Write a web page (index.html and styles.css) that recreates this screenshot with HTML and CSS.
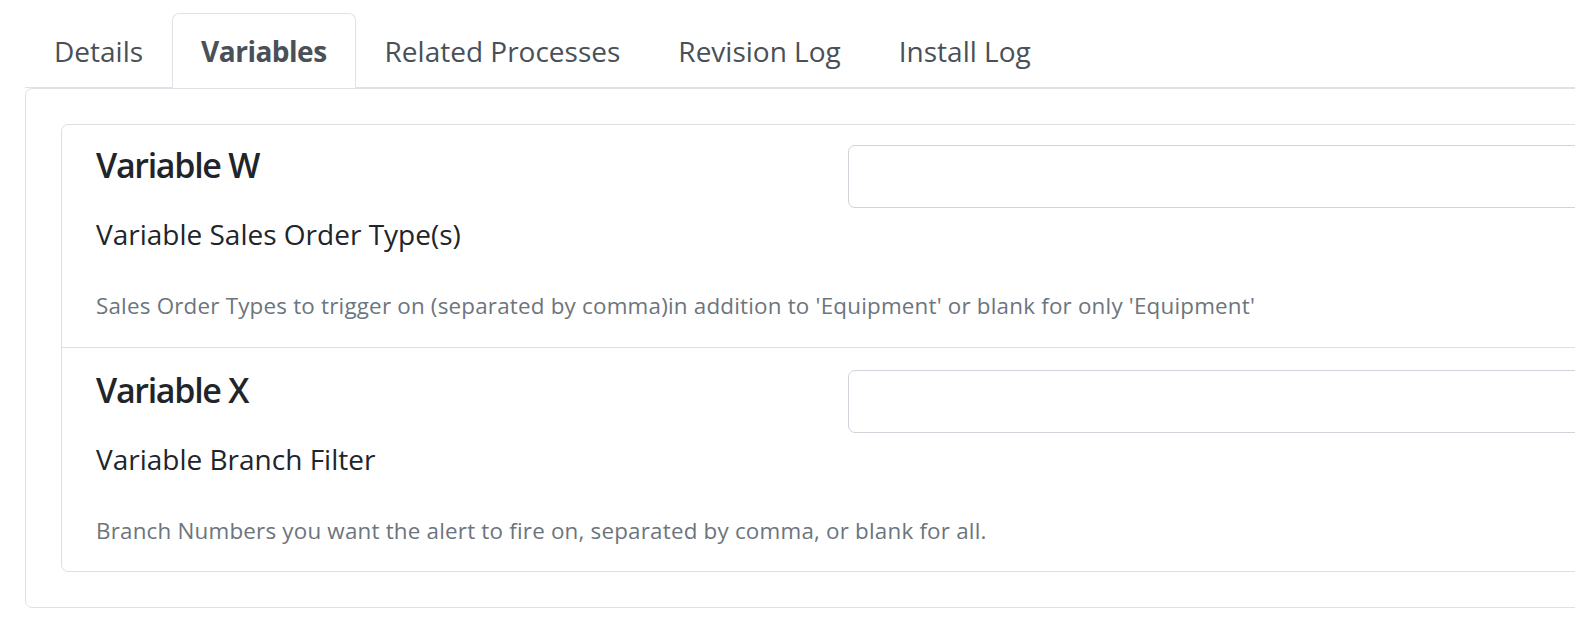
FILE: index.html
```html
<!DOCTYPE html>
<html lang="en">
<head>
    <meta charset="UTF-8">
    <meta name="viewport" content="width=device-width, initial-scale=1.0">
    <title>Process Variables</title>
    <link rel="stylesheet" href="styles.css">
</head>
<body>

    <div class="page">
        <ul class="nav-tabs">
            <li><a class="tab" href="#">Details</a></li>
            <li><a class="tab active" href="#">Variables</a></li>
            <li><a class="tab" href="#">Related Processes</a></li>
            <li><a class="tab" href="#">Revision Log</a></li>
            <li><a class="tab" href="#">Install Log</a></li>
        </ul>

        <div class="tab-pane">
            <div class="var-list">
                <div class="var-item">
                    <div class="var-row">
                        <div class="var-text">
                            <h5 class="var-name">Variable W</h5>
                            <label class="var-label" for="varW">Variable Sales Order Type(s)</label>
                        </div>
                        <div class="var-field">
                            <input type="text" id="varW" class="form-control">
                        </div>
                    </div>
                    <small class="var-help">Sales Order Types to trigger on (separated by comma)in addition to 'Equipment' or blank for only 'Equipment'</small>
                </div>
                <div class="var-item">
                    <div class="var-row">
                        <div class="var-text">
                            <h5 class="var-name">Variable X</h5>
                            <label class="var-label" for="varX">Variable Branch Filter</label>
                        </div>
                        <div class="var-field">
                            <input type="text" id="varX" class="form-control">
                        </div>
                    </div>
                    <small class="var-help">Branch Numbers you want the alert to fire on, separated by comma, or blank for all.</small>
                </div>
            </div>
        </div>
    </div>

</body>
</html>
```

FILE: styles.css
```css
body {
    font-family: 'Open Sans', sans-serif;
    background: #fff;
    color: #212529;
    margin: 0;
    overflow: hidden;
}

.page {
    width: 1700px;
    padding: 13px 0 0 25px;
}

/* Tabs */
.nav-tabs {
    display: flex;
    list-style: none;
    margin: 0;
    padding: 0;
    border-bottom: 1px solid #dee2e6;
}

.tab {
    display: block;
    margin-bottom: -1px;
    padding: 16px 28px 15px;
    font-size: 28px;
    line-height: 42px;
    color: #495057;
    text-decoration: none;
    border: 1px solid transparent;
    border-radius: 7px 7px 0 0;
}

.tab.active {
    font-weight: 700;
    letter-spacing: -0.5px;
    background: #fff;
    border-color: #dee2e6 #dee2e6 #fff;
}

.tab-pane {
    padding: 35px;
    border: 1px solid #dee2e6;
    border-radius: 7px;
}

/* Variable list */
.var-list {
    border: 1px solid rgba(0, 0, 0, 0.125);
    border-radius: 7px;
}

.var-item {
    padding: 19px 35px 24px 34px;
}

.var-item + .var-item {
    padding-top: 21px;
    border-top: 1px solid rgba(0, 0, 0, 0.125);
}

.var-row {
    display: grid;
    grid-template-columns: 700px 1fr;
    column-gap: 52px;
}

.var-name {
    margin: 0 0 27px;
    font-size: 34px;
    line-height: 42px;
    font-weight: 600;
    letter-spacing: -1.3px;
}

.var-label {
    display: block;
    font-size: 28px;
    line-height: 42px;
}

.form-control {
    display: block;
    box-sizing: border-box;
    width: 100%;
    height: 63px;
    margin-top: 1px;
    padding: 0 21px;
    font-family: inherit;
    font-size: 28px;
    border: 1px solid #ced4da;
    border-radius: 7px;
    background: #fff;
}

.var-help {
    display: block;
    margin-top: 34px;
    font-size: 22.4px;
    line-height: 33.6px;
    letter-spacing: 0.2px;
    color: #6c757d;
    white-space: nowrap;
}
```
